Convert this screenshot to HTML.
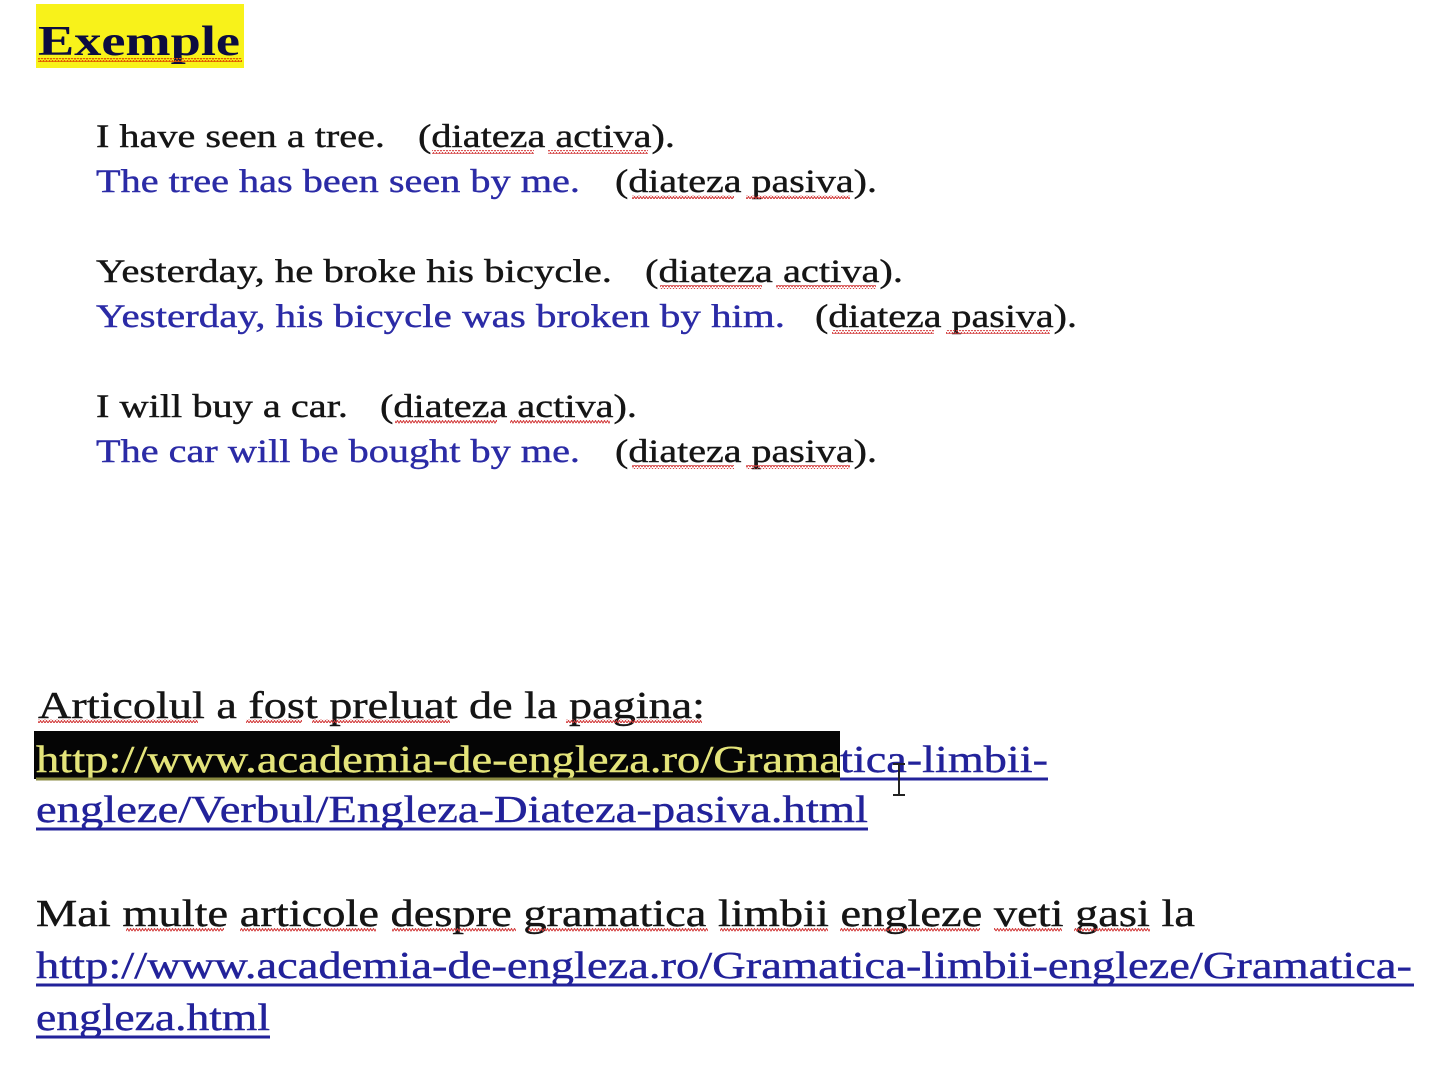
<!DOCTYPE html>
<html><head><meta charset="utf-8"><style>
html,body{margin:0;padding:0;background:#fff;width:1440px;height:1080px;overflow:hidden}
svg{display:block}
text{font-family:"Liberation Serif",serif}
.k{fill:#151515;font-size:33px;stroke:#151515;stroke-width:0.4}
.b{fill:#2b2ba6;font-size:33px;stroke:#2b2ba6;stroke-width:0.4}
.L{fill:#151515;font-size:38px;stroke:#151515;stroke-width:0.4}
.u{fill:#22229a;font-size:38px;stroke:#22229a;stroke-width:0.4}
</style></head><body>
<svg width="1440" height="1080" xmlns="http://www.w3.org/2000/svg">
<defs>
<pattern id="w" width="6" height="4" patternUnits="userSpaceOnUse"><path d="M0 3 L1.5 0.5 L3 3 L4.5 0.5 L6 3" fill="none" stroke="#d23a3a" stroke-width="1"/></pattern>
<pattern id="wo" width="6" height="4" patternUnits="userSpaceOnUse"><path d="M0 3 L1.5 0.5 L3 3 L4.5 0.5 L6 3" fill="none" stroke="#e05a00" stroke-width="1.3"/></pattern>
</defs>
<rect x="36" y="4" width="208" height="64" fill="#f8f21a"/>
<text x="38" y="55" font-size="42" font-weight="bold" fill="#0c0c40" textLength="202" lengthAdjust="spacingAndGlyphs">Exemple</text>
<rect x="38" y="58" width="204" height="4" fill="url(#wo)"/>

<text class="k" x="96" y="147" textLength="289" lengthAdjust="spacingAndGlyphs">I have seen a tree.</text>
<text class="k" x="418" y="147" textLength="257" lengthAdjust="spacingAndGlyphs">(diateza activa).</text>
<rect x="432" y="150" width="102" height="4" fill="url(#w)"/><rect x="548" y="150" width="100" height="4" fill="url(#w)"/>
<text class="b" x="96" y="192" textLength="484" lengthAdjust="spacingAndGlyphs">The tree has been seen by me.</text>
<text class="k" x="615" y="192" textLength="262" lengthAdjust="spacingAndGlyphs">(diateza pasiva).</text>
<rect x="632" y="195" width="102" height="4" fill="url(#w)"/><rect x="746" y="195" width="104" height="4" fill="url(#w)"/>

<text class="k" x="96" y="282" textLength="516" lengthAdjust="spacingAndGlyphs">Yesterday, he broke his bicycle.</text>
<text class="k" x="645" y="282" textLength="258" lengthAdjust="spacingAndGlyphs">(diateza activa).</text>
<rect x="660" y="285" width="102" height="4" fill="url(#w)"/><rect x="776" y="285" width="100" height="4" fill="url(#w)"/>
<text class="b" x="96" y="327" textLength="689" lengthAdjust="spacingAndGlyphs">Yesterday, his bicycle was broken by him.</text>
<text class="k" x="815" y="327" textLength="262" lengthAdjust="spacingAndGlyphs">(diateza pasiva).</text>
<rect x="832" y="330" width="102" height="4" fill="url(#w)"/><rect x="946" y="330" width="104" height="4" fill="url(#w)"/>

<text class="k" x="96" y="417" textLength="252" lengthAdjust="spacingAndGlyphs">I will buy a car.</text>
<text class="k" x="380" y="417" textLength="257" lengthAdjust="spacingAndGlyphs">(diateza activa).</text>
<rect x="395" y="420" width="102" height="4" fill="url(#w)"/><rect x="510" y="420" width="100" height="4" fill="url(#w)"/>
<text class="b" x="96" y="462" textLength="484" lengthAdjust="spacingAndGlyphs">The car will be bought by me.</text>
<text class="k" x="615" y="462" textLength="262" lengthAdjust="spacingAndGlyphs">(diateza pasiva).</text>
<rect x="632" y="465" width="102" height="4" fill="url(#w)"/><rect x="746" y="465" width="104" height="4" fill="url(#w)"/>

<text class="L" x="38" y="718" textLength="667" lengthAdjust="spacingAndGlyphs">Articolul a fost preluat de la pagina:</text>
<rect x="38" y="719" width="160" height="4" fill="url(#w)"/><rect x="246" y="719" width="56" height="4" fill="url(#w)"/><rect x="312" y="719" width="138" height="4" fill="url(#w)"/><rect x="566" y="719" width="136" height="4" fill="url(#w)"/>
<rect x="34" y="731" width="806" height="48" fill="#050505"/>
<text class="u" x="36" y="772" style="fill:#e4e47a;stroke:#e4e47a" textLength="804" lengthAdjust="spacingAndGlyphs">http://www.academia-de-engleza.ro/Grama</text>
<text class="u" x="840" y="772" textLength="208" lengthAdjust="spacingAndGlyphs">tica-limbii-</text>
<line x1="36" y1="779" x2="840" y2="779" stroke="#8a8a40" stroke-width="3"/>
<line x1="840" y1="779" x2="1048" y2="779" stroke="#22229a" stroke-width="3"/>
<path d="M899 764 V795 M893 764 H905 M893 795 H905" stroke="#222" stroke-width="2" fill="none"/>
<text class="u" x="36" y="822" textLength="832" lengthAdjust="spacingAndGlyphs">engleze/Verbul/Engleza-Diateza-pasiva.html</text>
<line x1="36" y1="829" x2="868" y2="829" stroke="#22229a" stroke-width="3"/>

<text class="L" x="36" y="926" textLength="1159" lengthAdjust="spacingAndGlyphs">Mai multe articole despre gramatica limbii engleze veti gasi la</text>
<rect x="126" y="928" width="98" height="4" fill="url(#w)"/><rect x="240" y="928" width="136" height="4" fill="url(#w)"/><rect x="392" y="928" width="124" height="4" fill="url(#w)"/><rect x="528" y="928" width="180" height="4" fill="url(#w)"/><rect x="720" y="928" width="108" height="4" fill="url(#w)"/><rect x="840" y="928" width="140" height="4" fill="url(#w)"/><rect x="994" y="928" width="68" height="4" fill="url(#w)"/><rect x="1074" y="928" width="76" height="4" fill="url(#w)"/>
<text class="u" x="36" y="978" textLength="1376" lengthAdjust="spacingAndGlyphs">http://www.academia-de-engleza.ro/Gramatica-limbii-engleze/Gramatica-</text>
<line x1="36" y1="985" x2="1414" y2="985" stroke="#22229a" stroke-width="3"/>
<text class="u" x="36" y="1030" textLength="234" lengthAdjust="spacingAndGlyphs">engleza.html</text>
<line x1="36" y1="1037" x2="270" y2="1037" stroke="#22229a" stroke-width="3"/>
</svg>
</body></html>
